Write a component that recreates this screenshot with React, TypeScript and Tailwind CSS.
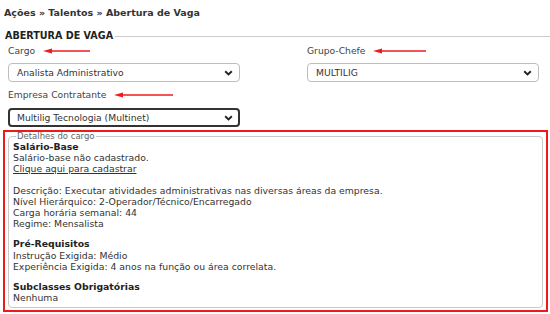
const Chevron = () => (
  <svg width="9" height="6" viewBox="0 0 9 6" className="shrink-0">
    <path d="M1.2 1.2 L4.5 4.4 L7.8 1.2" fill="none" stroke="#222" strokeWidth="1.9" />
  </svg>
);

const Arrow = ({ w }: { w: number }) => (
  <svg width={w} height="6" viewBox={`0 0 ${w} 6`} className="shrink-0">
    <path d={`M${w} 3 L6 3`} stroke="#ec1c1c" strokeWidth="1.7" />
    <path d="M0 3 L9 0.6 L9 5.4 Z" fill="#ec1c1c" />
  </svg>
);

const Select = ({ value, focused }: { value: string; focused?: boolean }) => (
  <div
    className={
      focused
        ? 'flex items-center justify-between h-[19px] w-[232px] rounded-[4px] border-2 border-[#333] bg-white pl-[7px] pr-[5px] text-[9.2px] text-[#333]'
        : 'flex items-center justify-between h-[19px] w-[232px] rounded-[4px] border border-[#bdbdbd] bg-white pl-[8px] pr-[6px] text-[9.2px] text-[#333]'
    }
  >
    <span>{value}</span>
    <Chevron />
  </div>
);

const Label = ({ text, arrow }: { text: string; arrow: number }) => (
  <div className="flex items-center gap-[8px] h-[14px] text-[9.2px] text-[#444]">
    <span>{text}</span>
    <Arrow w={arrow} />
  </div>
);

export default function App() {
  return (
    <div className="w-[550px] h-[314px] overflow-hidden bg-white font-['DejaVu_Sans',sans-serif] text-[#333]">
      <div className="pl-[4px] pt-[6px] text-[9.5px] font-bold text-[#333] leading-[14px]">Ações » Talentos » Abertura de Vaga</div>

      <div className="flex items-center gap-[2px] pl-[5px] mt-[10px] h-[12px]">
        <span className="text-[9.6px] font-bold text-[#222]">ABERTURA DE VAGA</span>
        <div className="flex-1 h-px bg-[#ccc]" />
      </div>

      <div className="grid grid-cols-[299px_1fr] pl-[8px] mt-[2px]">
        <div className="flex flex-col gap-[5px]">
          <Label text="Cargo" arrow={47} />
          <Select value="Analista Administrativo" />
        </div>
        <div className="flex flex-col gap-[5px]">
          <Label text="Grupo-Chefe" arrow={53} />
          <Select value="MULTILIG" />
        </div>
      </div>

      <div className="flex flex-col gap-[6px] pl-[8px] mt-[6px]">
        <Label text="Empresa Contratante" arrow={59} />
        <Select value="Multilig Tecnologia (Multinet)" focused />
      </div>

      <div className="ml-[3px] mt-[3px] w-[545px] h-[182px] border-2 border-[#ee1a1a] px-[3px] pt-0 pb-[2px]">
        <fieldset className="h-full rounded-[4px] border border-[#c8c8c8] pl-[4px] pr-[4px] pt-px pb-0 text-[9.3px] leading-[11.2px] text-[#333]">
          <legend className="px-[1px] ml-[3px] text-[8.5px] text-[#666] leading-[8px]">Detalhes do cargo</legend>
          <div className="font-bold text-[#222]">Salário-Base</div>
          <div>Salário-base não cadastrado.</div>
          <div className="underline">Clique aqui para cadastrar</div>
          <div className="mt-[10px]">Descrição: Executar atividades administrativas nas diversas áreas da empresa.</div>
          <div>Nível Hierárquico: 2-Operador/Técnico/Encarregado</div>
          <div>Carga horária semanal: 44</div>
          <div>Regime: Mensalista</div>
          <div className="mt-[9px] font-bold text-[#222]">Pré-Requisitos</div>
          <div>Instrução Exigida: Médio</div>
          <div>Experiência Exigida: 4 anos na função ou área correlata.</div>
          <div className="mt-[9px] font-bold text-[#222]">Subclasses Obrigatórias</div>
          <div>Nenhuma</div>
        </fieldset>
      </div>
    </div>
  );
}
